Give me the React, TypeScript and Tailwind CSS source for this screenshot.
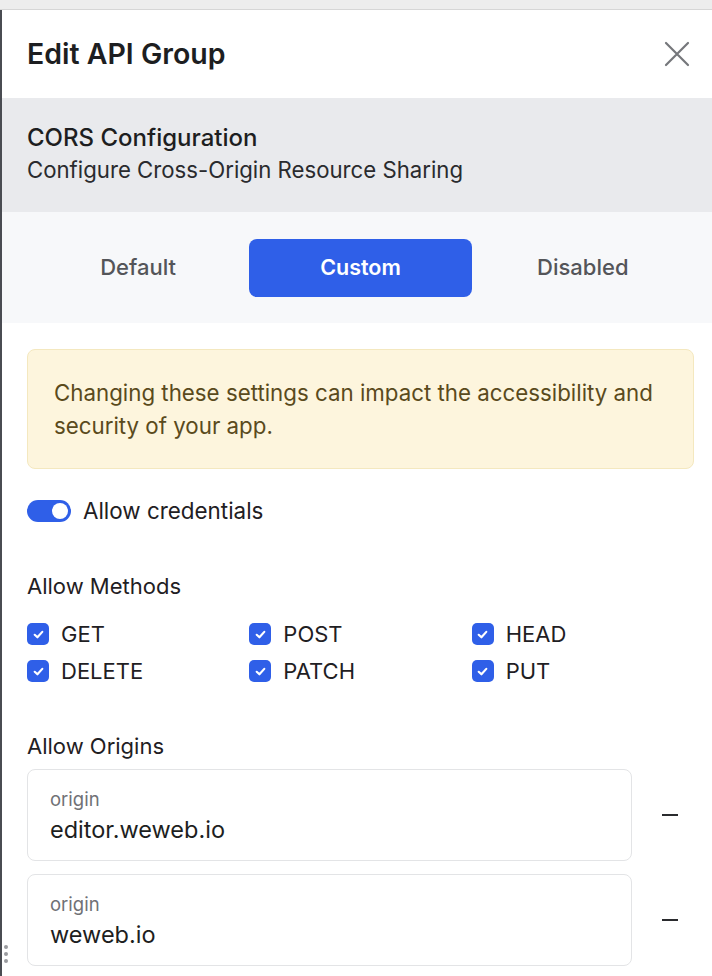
const methods = ["GET", "POST", "HEAD", "DELETE", "PATCH", "PUT"];
const origins = ["editor.weweb.io", "weweb.io"];

function CheckIcon() {
  return (
    <span className="flex h-[22px] w-[22px] shrink-0 items-center justify-center rounded-[5px] bg-[#2f5fe8]">
      <svg width="13" height="13" viewBox="0 0 12 12" fill="none">
        <path d="M2.5 6.3 L5 8.6 L9.5 3.6" stroke="white" strokeWidth="2" strokeLinecap="round" strokeLinejoin="round" />
      </svg>
    </span>
  );
}

export default function App() {
  return (
    <div className="h-[976px] w-[712px] overflow-hidden bg-[#ededed] font-['Inter',sans-serif] text-[#1f2023]">
      <div className="mt-[9px] flex h-[967px] border-t border-[#d6d6d6]">
        {/* backdrop edge */}
        <div className="w-[2px] bg-[#4a4c52]" />

        <div className="relative flex flex-1 flex-col bg-white">
          {/* Header */}
          <div className="flex h-[88px] items-center justify-between pl-[25px] pr-[22px]">
            <h1 className="text-[28.5px] font-semibold leading-[34px] text-[#1d1e21]">Edit API Group</h1>
            <svg width="26" height="26" viewBox="0 0 26 26" fill="none">
              <path d="M2 2 L24 24 M24 2 L2 24" stroke="#75777b" strokeWidth="2.2" strokeLinecap="round" />
            </svg>
          </div>

          {/* Section title */}
          <div className="flex h-[114px] flex-col justify-center bg-[#e9eaed] pb-[3px] pl-[25px]">
            <div className="text-[24px] font-medium leading-[30px] text-[#1d1e21]">CORS Configuration</div>
            <div className="mt-[3px] text-[22.2px] leading-[28px] text-[#2a2b2e]">Configure Cross-Origin Resource Sharing</div>
          </div>

          {/* Tabs */}
          <div className="grid h-[111px] grid-cols-3 items-center bg-[#f7f8fa] pl-[25px] pr-[18px]">
            <button className="h-[58px] text-[22px] font-medium text-[#545559]">Default</button>
            <button className="h-[58px] rounded-[8px] bg-[#2f5fe8] text-[21.5px] font-semibold text-white">Custom</button>
            <button className="h-[58px] text-[22px] font-medium text-[#545559]">Disabled</button>
          </div>

          <div className="flex flex-col pl-[25px] pr-[18px] pt-[26px]">
            {/* Warning */}
            <div className="rounded-[8px] border border-[#f4e8bf] bg-[#fdf5dd] px-[26px] py-[26px] text-[22.3px] leading-[33px] text-[#5a4a1c]">
              Changing these settings can impact the accessibility and security of your app.
            </div>

            {/* Toggle */}
            <div className="mt-[31px] flex h-[22px] items-center gap-[12px]">
              <span className="flex h-[22px] w-[44px] items-center justify-end rounded-full bg-[#2f5fe8] px-[3px]">
                <span className="h-[16px] w-[16px] rounded-full bg-white" />
              </span>
              <span className="text-[22.4px] leading-[28px] text-[#1f2023]">Allow credentials</span>
            </div>

            {/* Methods */}
            <div className="mt-[50px] text-[22px] leading-[28px] text-[#1f2023]">Allow Methods</div>
            <div className="mt-[23px] grid grid-cols-3 gap-y-[15px]">
              {methods.map((m) => (
                <label key={m} className="flex h-[22px] items-center gap-[12px]">
                  <CheckIcon />
                  <span className="text-[22px] leading-[22px] text-[#1f2023]">{m}</span>
                </label>
              ))}
            </div>

            {/* Origins */}
            <div className="mt-[50px] text-[22px] leading-[28px] text-[#1f2023]">Allow Origins</div>
            <div className="mt-[9px] flex flex-col gap-[13px]">
              {origins.map((o) => (
                <div key={o} className="flex items-center">
                  <div className="flex h-[92px] w-[605px] flex-col justify-center rounded-[8px] border border-[#e3e4e6] px-[22px]">
                    <div className="text-[18.5px] leading-[24px] text-[#707176]">origin</div>
                    <div className="mt-[5px] text-[23.5px] leading-[28px] text-[#1d1e21]">{o}</div>
                  </div>
                  <span className="ml-[30px] h-[2px] w-[16px] bg-[#2a2b2e]" />
                </div>
              ))}
            </div>
          </div>

          {/* drag handle */}
          <div className="absolute left-[2px] top-[935px] flex flex-col gap-[3px]">
            <span className="h-[4px] w-[4px] rounded-full bg-[#9a9b9f]" />
            <span className="h-[4px] w-[4px] rounded-full bg-[#9a9b9f]" />
            <span className="h-[4px] w-[4px] rounded-full bg-[#9a9b9f]" />
          </div>
        </div>
      </div>
    </div>
  );
}
